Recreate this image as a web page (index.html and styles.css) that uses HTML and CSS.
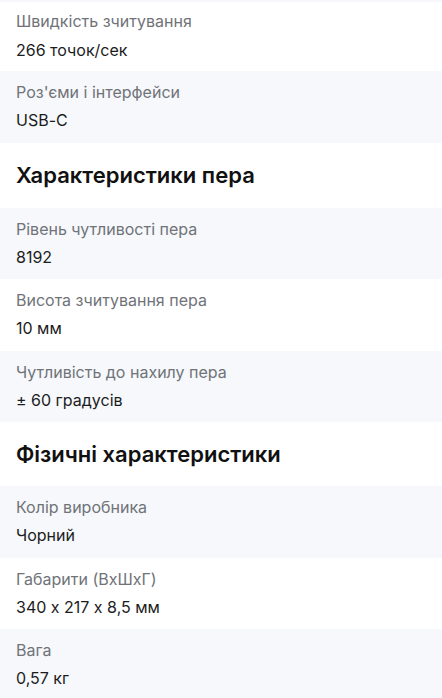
FILE: index.html
```html
<!DOCTYPE html>
<html lang="uk">
<head>
    <meta charset="UTF-8">
    <meta name="viewport" content="width=device-width, initial-scale=1.0">
    <title>Характеристики</title>
    <link rel="stylesheet" href="styles.css">
</head>
<body>
    <div class="specs">
        <!-- Rest des vorherigen Rows (nach oben gescrollt) -->
        <div class="spec-edge"></div>

        <div class="spec-row first">
            <div class="spec-label">Швидкість зчитування</div>
            <div class="spec-value">266 точок/сек</div>
        </div>
        <div class="spec-row shaded">
            <div class="spec-label">Роз'єми і інтерфейси</div>
            <div class="spec-value">USB-C</div>
        </div>

        <h2 class="spec-title">Характеристики пера</h2>

        <div class="spec-row shaded">
            <div class="spec-label">Рівень чутливості пера</div>
            <div class="spec-value">8192</div>
        </div>
        <div class="spec-row">
            <div class="spec-label">Висота зчитування пера</div>
            <div class="spec-value">10 мм</div>
        </div>
        <div class="spec-row shaded">
            <div class="spec-label">Чутливість до нахилу пера</div>
            <div class="spec-value">± 60 градусів</div>
        </div>

        <h2 class="spec-title short">Фізичні характеристики</h2>

        <div class="spec-row shaded">
            <div class="spec-label">Колір виробника</div>
            <div class="spec-value">Чорний</div>
        </div>
        <div class="spec-row">
            <div class="spec-label">Габарити (ВхШхГ)</div>
            <div class="spec-value">340 x 217 x 8,5 мм</div>
        </div>
        <div class="spec-row shaded">
            <div class="spec-label">Вага</div>
            <div class="spec-value">0,57 кг</div>
        </div>
    </div>
</body>
</html>
```

FILE: styles.css
```css
/* Grundlayout */
body {
    margin: 0;
    padding: 0;
    background-color: #ffffff;
    font-family: Inter, "Noto Sans", sans-serif;
    font-feature-settings: "calt" 0; /* kein automatisches × statt x */
    color: #1c1c1e;
    overflow: hidden;
}

.specs {
    display: flex;
    flex-direction: column;
}

.spec-edge {
    height: 2px;
    background-color: #f6f8fb;
}

/* Zeilen mit Eigenschaft und Wert */
.spec-row {
    box-sizing: border-box;
    height: 71.5px;
    padding: 9px 16px 0;
    display: flex;
    flex-direction: column;
    gap: 4px;
}

.spec-row.shaded {
    background-color: #f6f8fb;
}

.spec-row.first {
    height: 69px;
    padding-top: 7px;
    gap: 5px;
}

.spec-label {
    font-size: 16px;
    line-height: 24px;
    color: #707378;
}

.spec-value {
    font-size: 16px;
    line-height: 24px;
    color: #1c1c1e;
}

/* Abschnittsüberschriften */
.spec-title {
    box-sizing: border-box;
    height: 65px;
    margin: 0;
    padding: 16px 16px 0;
    font-size: 22px;
    line-height: 32px;
    font-weight: 600;
    color: #111111;
}

.spec-title.short {
    height: 64px;
}
```
